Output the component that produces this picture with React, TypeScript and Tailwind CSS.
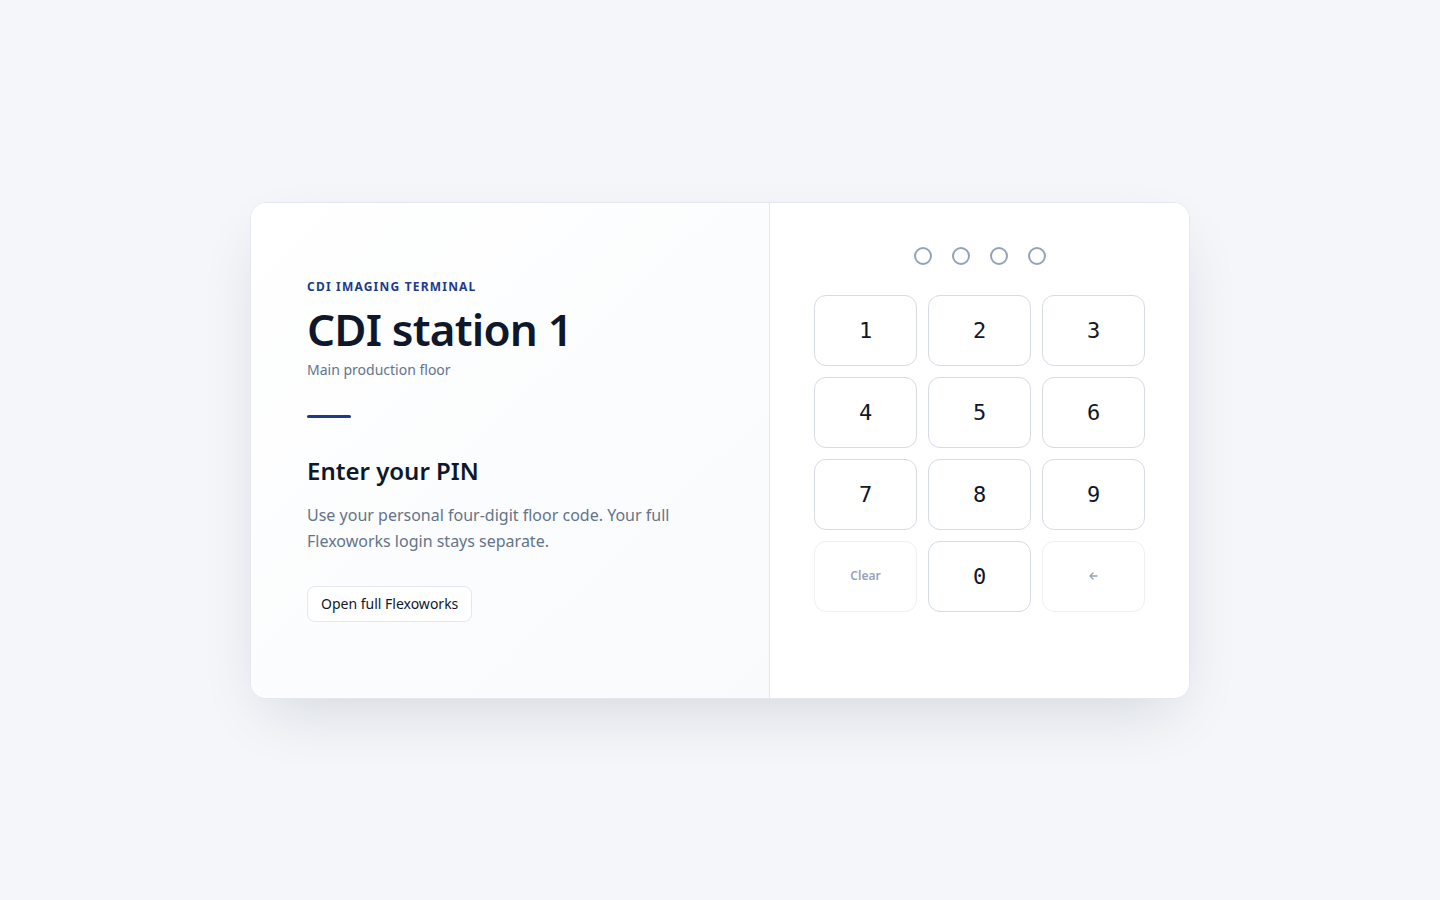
import React from "react";

const digitCls =
  "h-[71px] rounded-xl border border-[#d6dbe4] bg-white text-[22px] font-medium text-[#0f172a] font-['DejaVu_Sans_Mono',monospace]";

export default function App() {
  const keys = ["1", "2", "3", "4", "5", "6", "7", "8", "9"];
  return (
    <div className="min-h-screen w-full bg-[#f4f6fa] flex items-center justify-center font-['Noto_Sans',sans-serif]">
      <div className="w-[940px] h-[497px] flex rounded-2xl border border-[#e2e8f0] bg-white shadow-[0_24px_60px_-16px_rgba(15,23,42,0.14)] overflow-hidden">
        <div className="w-[519px] flex flex-col justify-center px-14 bg-gradient-to-br from-white to-[#f8fafc] border-r border-[#e2e8f0]">
          <div className="text-[12px] font-bold tracking-[0.1em] text-[#1e3a8a] leading-4">CDI IMAGING TERMINAL</div>
          <h1 className="mt-[10px] text-[44px] leading-[48px] font-semibold tracking-[-0.018em] text-[#0f172a]">CDI station 1</h1>
          <div className="mt-[7px] text-[14px] leading-5 text-[#64748b]">Main production floor</div>
          <div className="mt-[35px] w-[44px] h-[3px] rounded-full bg-[#1e3a8a]" />
          <h2 className="mt-[37px] text-[24px] leading-8 font-semibold text-[#0f172a]">Enter your PIN</h2>
          <p className="mt-[15px] text-[16px] leading-[26px] text-[#64748b] max-w-[380px]">
            Use your personal four-digit floor code. Your full Flexoworks login stays separate.
          </p>
          <div className="mt-[32px]">
            <button className="h-[36px] px-[13px] rounded-lg border border-[#e2e8f0] bg-white text-[14px] text-[#0f172a]">
              Open full Flexoworks
            </button>
          </div>
        </div>
        <div className="flex-1 bg-white px-11 pt-11">
          <div className="flex justify-center gap-5">
            {[0, 1, 2, 3].map((i) => (
              <div key={i} className="w-[18px] h-[18px] rounded-full border-2 border-[#94a3b8]" />
            ))}
          </div>
          <div className="mt-[30px] grid grid-cols-3 gap-x-[11px] gap-y-[11px]">
            {keys.map((k) => (
              <button key={k} className={digitCls}>
                {k}
              </button>
            ))}
            <button className="h-[71px] rounded-xl border border-[#eef0f4] bg-white text-[12px] font-semibold text-[#94a3b8]">
              Clear
            </button>
            <button className={digitCls}>0</button>
            <button className="h-[71px] rounded-xl border border-[#eef0f4] bg-white flex items-center justify-center">
              <svg width="9" height="8" viewBox="0 0 9 8" fill="none" stroke="#94a3b8" strokeWidth="1.3" strokeLinecap="round" strokeLinejoin="round">
                <path d="M8 4H1.2M4 1L1 4l3 3" />
              </svg>
            </button>
          </div>
        </div>
      </div>
    </div>
  );
}
